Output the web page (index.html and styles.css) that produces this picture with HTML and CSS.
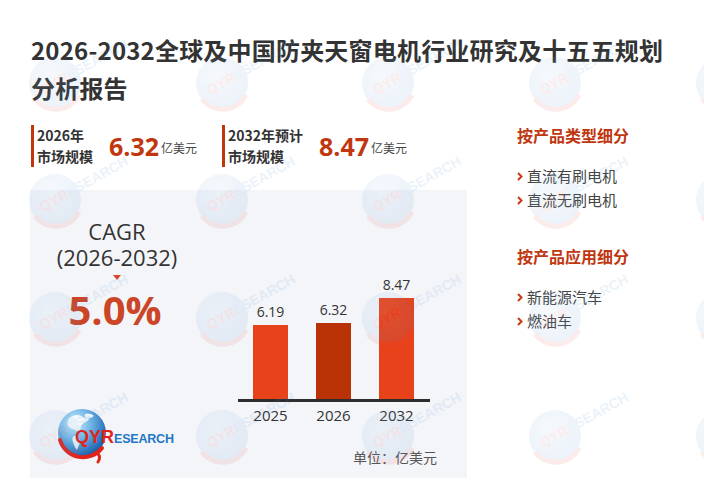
FILE: index.html
```html
<!DOCTYPE html>
<html lang="zh-CN">
<head>
<meta charset="utf-8">
<title>2026-2032全球及中国防夹天窗电机行业研究及十五五规划分析报告</title>
<link rel="stylesheet" href="styles.css">
</head>
<body>
<div class="page">
  <h1 class="title">2026-2032全球及中国防夹天窗电机行业研究及十五五规划<br>分析报告</h1>
  <div class="main">
    <div class="left">
      <div class="stats">
        <div class="stat">
          <div class="stat-label">2026年<br>市场规模</div>
          <div class="stat-value">6.32</div>
          <div class="stat-unit">亿美元</div>
        </div>
        <div class="stat">
          <div class="stat-label">2032年预计<br>市场规模</div>
          <div class="stat-value">8.47</div>
          <div class="stat-unit">亿美元</div>
        </div>
      </div>
      <div class="panel">
        <div class="cagr-col">
          <div class="cagr-line">CAGR</div>
          <div class="cagr-line">(2026-2032)</div>
          <div class="cagr-arrow"></div>
          <div class="cagr-value">5.0%</div>
          <div class="logo">
            <svg class="logo-globe" width="60" height="62" viewBox="0 0 60 62">
              <defs>
                <radialGradient id="globeFill" cx="0.35" cy="0.3" r="0.75">
                  <stop offset="0" stop-color="#d6f0fb"/>
                  <stop offset="0.45" stop-color="#6fb6e6"/>
                  <stop offset="1" stop-color="#1459a8"/>
                </radialGradient>
              </defs>
              <circle cx="30" cy="27" r="24" fill="url(#globeFill)"/>
              <path d="M17 12c4-3 9-4 12-2 2 2 6 1 8 3-1 3-5 3-7 6-2 2-1 5-4 6-3 0-5-3-8-3-2-1-4-4-1-10z" fill="#ffffff" opacity="0.85"/>
              <path d="M33 8c3-1 7 0 9 2-2 1-4 3-7 2-2-1-3-2-2-4z" fill="#ffffff" opacity="0.85"/>
              <path d="M22 30c3 0 5 2 6 5 0 3-2 6-3 9-2-2-3-5-4-8-1-2-1-5 1-6z" fill="#ffffff" opacity="0.85"/>
              <path d="M8 34 A24 24 0 0 0 50 42" stroke="#e2231a" stroke-width="4" fill="none" stroke-linecap="round"/>
              <path d="M44 46 q6 4 2 10" stroke="#e2231a" stroke-width="3" fill="none" stroke-linecap="round"/>
            </svg>
            <span class="logo-text"><span class="logo-qyr">QYR</span><span class="logo-rest">ESEARCH</span></span>
          </div>
        </div>
        <div class="chart">
          <div class="bars">
            <div class="bar-col"><span class="bar-val">6.19</span><div class="bar" style="height:74px"></div></div>
            <div class="bar-col"><span class="bar-val">6.32</span><div class="bar bar-dark" style="height:76px"></div></div>
            <div class="bar-col"><span class="bar-val">8.47</span><div class="bar" style="height:101px"></div></div>
          </div>
          <div class="years"><span>2025</span><span>2026</span><span>2032</span></div>
          <div class="unit">单位：亿美元</div>
        </div>
      </div>
    </div>
    <div class="right">
      <h2 class="seg-title">按产品类型细分</h2>
      <ul class="seg-list">
        <li><svg class="chev" width="6" height="9" viewBox="0 0 6 9"><path d="M1 1l3.5 3.5L1 8" stroke="#c8390f" stroke-width="2" fill="none"/></svg>直流有刷电机</li>
        <li><svg class="chev" width="6" height="9" viewBox="0 0 6 9"><path d="M1 1l3.5 3.5L1 8" stroke="#c8390f" stroke-width="2" fill="none"/></svg>直流无刷电机</li>
      </ul>
      <h2 class="seg-title seg-title-2">按产品应用细分</h2>
      <ul class="seg-list">
        <li><svg class="chev" width="6" height="9" viewBox="0 0 6 9"><path d="M1 1l3.5 3.5L1 8" stroke="#c8390f" stroke-width="2" fill="none"/></svg>新能源汽车</li>
        <li><svg class="chev" width="6" height="9" viewBox="0 0 6 9"><path d="M1 1l3.5 3.5L1 8" stroke="#c8390f" stroke-width="2" fill="none"/></svg>燃油车</li>
      </ul>
    </div>
  </div>
  <svg class="watermarks" width="704" height="500" viewBox="0 0 704 500" aria-hidden="true">
    <defs>
      <radialGradient id="wmFill" cx="0.4" cy="0.35" r="0.7">
        <stop offset="0" stop-color="#a9cdef"/>
        <stop offset="1" stop-color="#4a88cc"/>
      </radialGradient>
      <g id="wm">
        <circle cx="0" cy="0" r="26" fill="url(#wmFill)"/>
        <path d="M-20 16 A26 26 0 0 0 24 12" stroke="#e24a4a" stroke-width="5" fill="none"/>
        <text x="-12" y="12" transform="rotate(-29 -12 12)" font-family="Liberation Sans, sans-serif" font-weight="700" font-size="14" fill="#4a8fd0"><tspan fill="#e24a4a">QYR</tspan>ESEARCH</text>
      </g>
    </defs>
    <use href="#wm" x="55" y="83"/><use href="#wm" x="222" y="83"/><use href="#wm" x="388" y="83"/><use href="#wm" x="555" y="83"/><use href="#wm" x="722" y="83"/>
    <use href="#wm" x="55" y="200"/><use href="#wm" x="222" y="200"/><use href="#wm" x="388" y="200"/><use href="#wm" x="555" y="200"/><use href="#wm" x="722" y="200"/>
    <use href="#wm" x="55" y="318"/><use href="#wm" x="222" y="318"/><use href="#wm" x="388" y="318"/><use href="#wm" x="555" y="318"/><use href="#wm" x="722" y="318"/>
    <use href="#wm" x="55" y="436"/><use href="#wm" x="222" y="436"/><use href="#wm" x="388" y="436"/><use href="#wm" x="555" y="436"/><use href="#wm" x="722" y="436"/>
  </svg>
</div>
</body>
</html>
```

FILE: styles.css
```css
html, body {
  margin: 0;
  padding: 0;
  background: #ffffff;
}

body {
  font-family: "Noto Sans CJK SC", "Noto Sans", sans-serif;
  color: #333333;
}

.page {
  position: relative;
  width: 704px;
  height: 500px;
  overflow: hidden;
  box-sizing: border-box;
  padding: 31px 0 0 30px;
}

.title {
  margin: 0 0 0 1px;
  font-size: 24px;
  line-height: 38px;
  font-weight: 700;
  letter-spacing: 0.2px;
  color: #333333;
  white-space: nowrap;
}

.main {
  display: flex;
  margin-top: 16px;
}

.left {
  width: 437px;
  flex: none;
}

/* stats row */
.stats {
  display: flex;
  gap: 25px;
  margin: 2px 0 0 1px;
  height: 42px;
}

.stat {
  display: flex;
  align-items: center;
  border-left: 3px solid #c0370f;
  padding-left: 3px;
}

.stat-label {
  font-size: 14px;
  line-height: 21px;
  font-weight: 700;
  color: #333333;
}

.stat-value {
  font-family: "Open Sans", "Noto Sans", sans-serif;
  font-size: 25px;
  line-height: 1;
  font-weight: 700;
  color: #c0370f;
  margin-left: 16px;
}

.stat-unit {
  font-size: 12px;
  color: #444444;
  margin-left: 2px;
  margin-top: 2px;
}

/* grey panel */
.panel {
  margin-top: 23px;
  height: 288px;
  background: #f3f5f9;
  display: flex;
}

.cagr-col {
  width: 174px;
  flex: none;
  display: flex;
  flex-direction: column;
  align-items: center;
  padding-top: 28px;
}

.cagr-line {
  font-family: "Open Sans", "Noto Sans", sans-serif;
  font-size: 22px;
  line-height: 26px;
  height: 26px;
  text-align: center;
  color: #333333;
}

.cagr-arrow {
  width: 0;
  height: 0;
  margin-top: 5px;
  border-left: 4px solid transparent;
  border-right: 4px solid transparent;
  border-top: 5px solid #d9472b;
}

.cagr-value {
  font-family: "Open Sans", "Noto Sans", sans-serif;
  font-size: 40px;
  line-height: 40px;
  font-weight: 700;
  color: #cc4526;
  margin-top: 10px;
  margin-right: 4px;
}

.logo {
  position: relative;
  align-self: flex-start;
  margin-left: 22px;
  margin-top: 76px;
  width: 124px;
  height: 62px;
}

.logo-globe {
  display: block;
}

.logo-text {
  position: absolute;
  left: 23px;
  top: 21px;
  font-family: "Liberation Sans", Arial, sans-serif;
  font-weight: 700;
  white-space: nowrap;
  line-height: 20px;
}

.logo-qyr {
  font-size: 18px;
  color: #e2231a;
}

.logo-rest {
  font-size: 12.5px;
  color: #1f77c6;
  letter-spacing: -0.2px;
}

/* bar chart */
.chart {
  margin-left: 34px;
  width: 199px;
  padding-top: 79px;
}

.bars {
  box-sizing: border-box;
  width: 192px;
  height: 133px;
  padding: 0 16px 0 15px;
  display: flex;
  align-items: flex-end;
  gap: 28px;
  border-bottom: 3px solid #2d2d2d;
}

.bar-col {
  width: 35px;
  display: flex;
  flex-direction: column;
  align-items: center;
}

.bar-val {
  font-family: "Open Sans", "Noto Sans", sans-serif;
  font-size: 14px;
  line-height: 18px;
  margin-bottom: 4px;
  color: #333333;
}

.bar {
  width: 35px;
  background: #e8421a;
}

.bar-dark {
  background: #b83206;
}

.years {
  display: flex;
  gap: 28px;
  padding-left: 15px;
  margin-top: 3px;
}

.years span {
  width: 35px;
  display: flex;
  justify-content: center;
  font-family: "Open Sans", "Noto Sans", sans-serif;
  font-size: 15px;
  line-height: 20px;
  color: #333333;
}

.unit {
  margin-top: 22px;
  text-align: right;
  font-size: 14px;
  line-height: 20px;
  color: #555555;
}

/* right column */
.right {
  margin-left: 50px;
}

.seg-title {
  margin: 0;
  font-size: 16px;
  line-height: 24px;
  font-weight: 700;
  color: #c0370f;
}

.seg-title-2 {
  margin-top: 32px;
}

.seg-list {
  list-style: none;
  margin: 17px 0 0;
  padding: 0;
}

.seg-list li {
  display: flex;
  align-items: center;
  gap: 4px;
  font-size: 15px;
  line-height: 24px;
  color: #444444;
}

.chev {
  flex: none;
}

/* faint QYResearch watermark pattern laid over the page */
.watermarks {
  position: absolute;
  left: 0;
  top: 0;
  pointer-events: none;
  opacity: 0.1;
}
```
